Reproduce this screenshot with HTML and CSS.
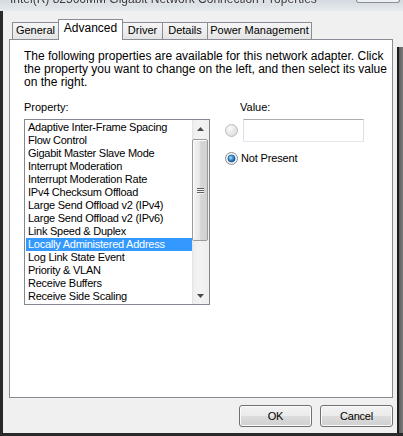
FILE: index.html
```html
<!DOCTYPE html>
<html>
<head>
<meta charset="utf-8">
<link rel="stylesheet" href="styles.css">
</head>
<body>
<div class="window">
  <div class="titlebar">
    <div class="title">Intel(R) 82566MM Gigabit Network Connection Properties</div>
    <div class="close"></div>
  </div>
  <div class="main">
    <div class="leftedge"></div>
    <div class="client">
      <div class="tabs">
        <div class="tab t-general">General</div>
        <div class="tab t-adv active">Advanced</div>
        <div class="tab t-driver">Driver</div>
        <div class="tab t-details">Details</div>
        <div class="tab t-power">Power Management</div>
      </div>
      <div class="panel">
        <p class="intro">The following properties are available for this network adapter. Click<br>the property you want to change on the left, and then select its value<br>on the right.</p>
        <div class="props">
          <div class="left">
            <div class="label">Property:</div>
            <div class="listbox">
              <ul class="items">
                <li>Adaptive Inter-Frame Spacing</li>
                <li>Flow Control</li>
                <li>Gigabit Master Slave Mode</li>
                <li>Interrupt Moderation</li>
                <li>Interrupt Moderation Rate</li>
                <li>IPv4 Checksum Offload</li>
                <li>Large Send Offload v2 (IPv4)</li>
                <li>Large Send Offload v2 (IPv6)</li>
                <li>Link Speed &amp; Duplex</li>
                <li class="selected">Locally Administered Address</li>
                <li>Log Link State Event</li>
                <li>Priority &amp; VLAN</li>
                <li>Receive Buffers</li>
                <li>Receive Side Scaling</li>
              </ul>
              <div class="vscroll">
                <div class="sbtn">
                  <svg width="7" height="4" viewBox="0 0 7 4"><polygon points="0,4 7,4 3.5,0" fill="#4a4a4a"/></svg>
                </div>
                <div class="thumb">
                  <div class="grip"><span></span><span></span><span></span></div>
                </div>
                <div class="track"></div>
                <div class="sbtn">
                  <svg width="7" height="4" viewBox="0 0 7 4"><polygon points="0,0 7,0 3.5,4" fill="#4a4a4a"/></svg>
                </div>
              </div>
            </div>
          </div>
          <div class="right">
            <div class="label value-label">Value:</div>
            <div class="opt-row">
              <svg class="radio" width="13" height="13" viewBox="0 0 13 13">
                <defs>
                  <radialGradient id="rg1" cx="0.35" cy="0.35" r="0.7">
                    <stop offset="0" stop-color="#fbfbfb"/>
                    <stop offset="1" stop-color="#dcdcdc"/>
                  </radialGradient>
                </defs>
                <circle cx="6.5" cy="6.5" r="6" fill="url(#rg1)" stroke="#bcbcbc"/>
              </svg>
              <div class="textbox"></div>
            </div>
            <div class="opt-row2">
              <svg class="radio" width="13" height="13" viewBox="0 0 13 13">
                <defs>
                  <radialGradient id="rg2" cx="0.4" cy="0.4" r="0.6">
                    <stop offset="0" stop-color="#a9e4ff"/>
                    <stop offset="0.55" stop-color="#3a8fd0"/>
                    <stop offset="1" stop-color="#134f8f"/>
                  </radialGradient>
                </defs>
                <circle cx="6.5" cy="6.5" r="6" fill="#f2f2f2" stroke="#8c8e90"/>
                <circle cx="6.5" cy="6.5" r="3.6" fill="url(#rg2)" stroke="#1d4e86" stroke-width="0.6"/>
              </svg>
              <span class="opt-text">Not Present</span>
            </div>
          </div>
        </div>
      </div>
      <div class="buttons">
        <button class="btn">OK</button>
        <button class="btn">Cancel</button>
      </div>
    </div>
    <div class="rightedge"></div>
  </div>
  <div class="bottomedge"></div>
</div>
</body>
</html>
```

FILE: styles.css
```css
html, body {
  margin: 0;
  padding: 0;
}

body {
  background: #f0f0f0;
  font-family: "Liberation Sans", Arial, sans-serif;
  font-size: 11px;
  color: #000;
}

.window {
  width: 403px;
  height: 436px;
  display: flex;
  flex-direction: column;
  overflow: hidden;
}

.titlebar {
  height: 11px;
  flex: 0 0 11px;
  display: flex;
  overflow: hidden;
  background: linear-gradient(#d4dae1, #e6eaee);
}

.title {
  flex: 0 0 auto;
  margin-top: -8px;
  margin-left: 10px;
  font-size: 12px;
  line-height: 15px;
  white-space: nowrap;
  color: #3c3c3c;
  text-shadow: 0 0 5px #ffffff;
  filter: blur(0.5px);
}

.close {
  flex: 0 0 44px;
  height: 3px;
  margin-left: auto;
  margin-right: 3px;
  box-sizing: border-box;
  border: 1px solid #8a8f96;
  border-top: none;
  border-radius: 0 0 3px 3px;
  background: #eef1f4;
}

.main {
  flex: 1;
  display: flex;
}

.leftedge {
  width: 3px;
  flex: 0 0 3px;
  background: #2a2a2a;
}

.client {
  width: 394px;
  flex: 0 0 394px;
  box-sizing: border-box;
  padding: 8px 0 0 6px;
  background: #f0f0f0;
}

.rightedge {
  width: 6px;
  flex: 0 0 6px;
  background:
    linear-gradient(#f0f0f0, #f0f0f0) top left / 100% 36px no-repeat,
    linear-gradient(to right, #1c1c1c 0, #1c1c1c 2px, #5f5f5f 2px, #7a7a7a 100%);
}

.bottomedge {
  height: 3px;
  flex: 0 0 3px;
  background: #2a2a2a;
}

/* Tabs */
.tabs {
  display: flex;
  align-items: flex-end;
  height: 20px;
  margin-left: 3px;
  position: relative;
  z-index: 1;
}

.tab {
  box-sizing: border-box;
  height: 17px;
  border: 1px solid #898c95;
  border-bottom: none;
  background: linear-gradient(#f6f6f6, #e4e4e4);
  text-align: center;
  font-size: 11px;
  line-height: 15px;
  margin-left: -1px;
  white-space: nowrap;
}

.t-general { width: 47px; margin-left: 0; }
.t-adv { width: 65px; }
.t-driver { width: 41px; }
.t-details { width: 46px; }
.t-power { width: 105px; }

.tab.active {
  height: 21px;
  margin-bottom: -1px;
  background: #ffffff;
  font-size: 12px;
  line-height: 17px;
  position: relative;
  z-index: 2;
}

/* Panel */
.panel {
  box-sizing: border-box;
  width: 384px;
  height: 359px;
  border: 1px solid #898c95;
  background: #ffffff;
  padding: 10px 14px 0 14px;
}

.intro {
  margin: 0;
  font-size: 12px;
  line-height: 13px;
  white-space: nowrap;
}

.props {
  display: flex;
  margin-top: 12px;
}

.label {
  line-height: 13px;
  height: 13px;
}

.left {
  width: 186px;
  flex: 0 0 186px;
}

.listbox {
  margin-top: 5px;
  box-sizing: border-box;
  width: 186px;
  height: 186px;
  border: 1px solid #828790;
  display: flex;
}

.items {
  flex: 1;
  margin: 0;
  padding: 1px 0 0 1px;
  list-style: none;
  overflow: hidden;
}

.items li {
  height: 13px;
  line-height: 13px;
  padding-left: 2px;
  letter-spacing: -0.25px;
  white-space: nowrap;
}

.items li.selected {
  background: #3399ff;
  color: #ffffff;
}

.vscroll {
  width: 17px;
  flex: 0 0 17px;
  display: flex;
  flex-direction: column;
  background: linear-gradient(to right, #e2e2e2 0, #efefef 2px, #f3f3f3 50%, #eeeeee 100%);
}

.sbtn {
  height: 17px;
  flex: 0 0 17px;
  display: flex;
  align-items: center;
  justify-content: center;
}

.thumb {
  box-sizing: border-box;
  height: 102px;
  flex: 0 0 102px;
  width: 16px;
  margin-top: 2px;
  margin-left: 0;
  border: 1px solid #9a9a9a;
  border-radius: 2px;
  background: linear-gradient(to right, #f3f3f3 0, #e8e8e8 45%, #d6d6d6 55%, #d2d2d2 100%);
  box-shadow: inset 1px 1px 0 #fdfdfd;
  display: flex;
  align-items: center;
  justify-content: center;
}

.grip {
  display: flex;
  flex-direction: column;
  gap: 1px;
}

.grip span {
  display: block;
  width: 7px;
  height: 1px;
  background: #5f5f5f;
  box-shadow: 0 1px 0 #f5f5f5;
}

.track {
  flex: 1;
}

.right {
  margin-left: 15px;
  width: 140px;
}

.value-label {
  padding-left: 15px;
}

.opt-row {
  margin-top: 5px;
  display: flex;
  align-items: center;
  height: 23px;
}

.radio {
  display: block;
  flex: 0 0 13px;
}

.textbox {
  margin-left: 5px;
  box-sizing: border-box;
  width: 121px;
  height: 23px;
  background: #ffffff;
  border: 1px solid #dbdfe6;
  border-top-color: #abadb3;
  border-bottom-color: #e3e9ef;
}

.opt-row2 {
  margin-top: 10px;
  display: flex;
  align-items: center;
  height: 13px;
}

.opt-text {
  margin-left: 3px;
  line-height: 13px;
  letter-spacing: -0.15px;
  white-space: nowrap;
}

/* Buttons */
.buttons {
  width: 384px;
  margin-top: 7px;
  display: flex;
  justify-content: flex-end;
  gap: 8px;
}

.btn {
  box-sizing: border-box;
  width: 73px;
  height: 22px;
  padding: 0;
  font-family: "Liberation Sans", Arial, sans-serif;
  font-size: 11px;
  letter-spacing: -0.2px;
  color: #000;
  border: 1px solid #707070;
  border-radius: 3px;
  background: linear-gradient(#f2f2f2 0, #ebebeb 50%, #dddddd 50%, #cfcfcf 100%);
  box-shadow: inset 0 0 0 1px #fbfbfb;
}
```
